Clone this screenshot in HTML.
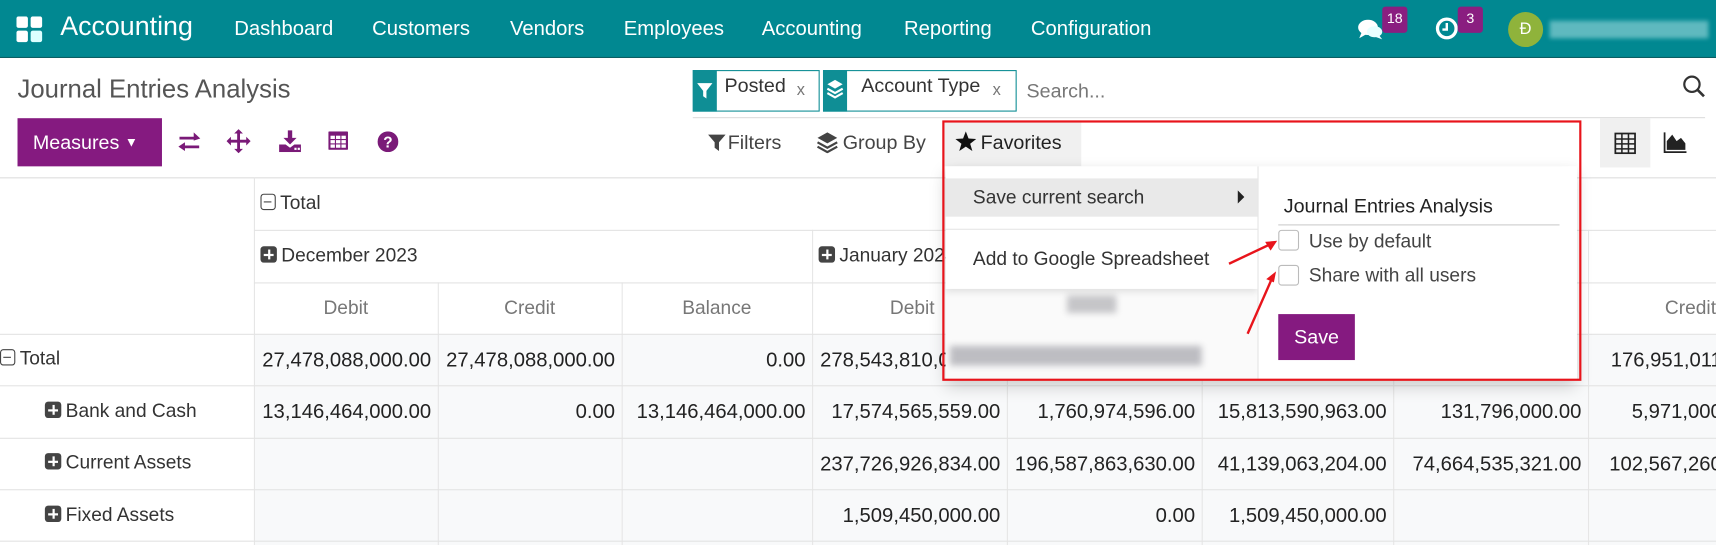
<!DOCTYPE html>
<html><head><meta charset="utf-8"><style>
*{box-sizing:border-box;margin:0;padding:0}
html,body{width:1716px;height:545px;overflow:hidden;background:#fff;font-family:"Liberation Sans",Arial,sans-serif}
#w{position:absolute;left:0;top:0;width:1568px;height:498px;transform:scale(1.0944);transform-origin:0 0;overflow:hidden}
.a{position:absolute;white-space:nowrap}
.nav{position:absolute;left:0;top:0;width:1568px;height:53px;background:#018891;border-bottom:1px solid #0b5e63}
.nv{position:absolute;top:15px;color:#fff;font-size:18.5px}
.badge{position:absolute;background:#8a1e80;color:#fff;font-size:13px;border-radius:3px;text-align:center;line-height:22px;height:24px}
.pi{fill:#7a1a78}
.cell{position:absolute;height:47px;line-height:47px;font-size:18.5px;color:#222;text-align:right;padding-right:6px;overflow:hidden;white-space:nowrap}
.hd{color:#777;text-align:center;padding:0;font-size:17.5px}
.vl{position:absolute;width:1px;background:#e6e6e6}
.hl{position:absolute;height:1px;background:#e3e3e3}
.plus{display:inline-block;width:15px;height:15px;background:#444;border-radius:3px;position:relative;vertical-align:-1px;margin-right:4px}
.plus:before{content:"";position:absolute;left:3px;top:6.5px;width:9px;height:2px;background:#fff}
.plus:after{content:"";position:absolute;left:6.5px;top:3px;width:2px;height:9px;background:#fff}
.minus{display:inline-block;width:14px;height:15px;border:1.5px solid #444;border-radius:3px;position:relative;vertical-align:-1px;margin-right:4px}
.minus:before{content:"";position:absolute;left:2px;top:5.5px;width:7px;height:1.5px;background:#444}
.blur{position:absolute;background:#c8c8cc;filter:blur(3px)}
</style></head><body><div id="w">
<div class="nav">
  <svg class="a" style="left:15px;top:15px" width="24" height="24"><rect x="0" y="0" width="10.5" height="10.5" rx="2" fill="#fff"/><rect x="13" y="0" width="10.5" height="10.5" rx="2" fill="#fff"/><rect x="0" y="13" width="10.5" height="10.5" rx="2" fill="#fff"/><rect x="13" y="13" width="10.5" height="10.5" rx="2" fill="#dff"/></svg>
  <div class="nv" style="left:55px;top:11px;font-size:24.5px">Accounting</div>
  <div class="nv" style="left:214px">Dashboard</div>
  <div class="nv" style="left:340px">Customers</div>
  <div class="nv" style="left:466px">Vendors</div>
  <div class="nv" style="left:570px">Employees</div>
  <div class="nv" style="left:696px">Accounting</div>
  <div class="nv" style="left:826px">Reporting</div>
  <div class="nv" style="left:942px">Configuration</div>
  <svg class="a" style="left:1240px;top:16px" width="26" height="22"><ellipse cx="10" cy="9" rx="9" ry="7" fill="#fff"/><path d="M4 14 L2 19 L9 15Z" fill="#fff"/><ellipse cx="16" cy="13" rx="7" ry="5" fill="#e8ffff"/><path d="M20 16 L23 20 L15 17Z" fill="#e8ffff"/></svg>
  <div class="badge" style="left:1263px;top:6px;width:23px">18</div>
  <svg class="a" style="left:1311px;top:15px" width="22" height="22"><circle cx="11" cy="11" r="8.5" stroke="#fff" stroke-width="3" fill="none"/><path d="M11 6 V12 H7" stroke="#fff" stroke-width="2.2" fill="none"/></svg>
  <div class="badge" style="left:1332px;top:6px;width:23px">3</div>
  <div class="a" style="left:1378px;top:11px;width:32px;height:32px;border-radius:50%;background:#8fb33b;color:#fff;font-size:15px;text-align:center;line-height:32px">Đ</div>
  <div class="blur" style="left:1416px;top:19px;width:145px;height:16px;background:#5fb9bf;filter:blur(2px)"></div>
</div>
<div class="a" style="left:16px;top:68px;font-size:23.5px;color:#555">Journal Entries Analysis</div>
<div class="a" style="left:633px;top:64px;width:116px;height:38px;border:1px solid #0f8e95"></div>
<div class="a" style="left:633px;top:64px;width:22px;height:38px;background:#0f8e95"></div>
<svg class="a" style="left:637px;top:75px" width="14" height="16"><path d="M0 1 H14 L8.5 8 V15 L5.5 13 V8Z" fill="#fff"/></svg>
<div class="a" style="left:662px;top:68px;font-size:18px;color:#333">Posted</div>
<div class="a" style="left:728px;top:74px;font-size:15px;color:#777">x</div>
<div class="a" style="left:752px;top:64px;width:177px;height:38px;border:1px solid #0f8e95"></div>
<div class="a" style="left:752px;top:64px;width:22px;height:38px;background:#0f8e95"></div>
<svg class="a" style="left:755px;top:72px" width="16" height="20"><path d="M8 1 L15 5 L8 9 L1 5Z" fill="#fff"/><path d="M1 9 L8 13 L15 9" stroke="#fff" stroke-width="2" fill="none"/><path d="M1 13 L8 17 L15 13" stroke="#fff" stroke-width="2" fill="none"/></svg>
<div class="a" style="left:787px;top:68px;font-size:18px;color:#333">Account Type</div>
<div class="a" style="left:907px;top:74px;font-size:15px;color:#777">x</div>
<div class="a" style="left:938px;top:73px;font-size:18px;color:#777">Search...</div>
<svg class="a" style="left:1537px;top:68px" width="22" height="22"><circle cx="9" cy="9" r="7" stroke="#333" stroke-width="2" fill="none"/><path d="M14 14 L20 20" stroke="#333" stroke-width="2.4"/></svg>
<div class="hl" style="left:633px;top:107px;width:925px;background:#ddd"></div>
<div class="a" style="left:16px;top:108px;width:132px;height:44px;background:#851a80;color:#fff;font-size:18px;line-height:44px;padding-left:14px">Measures <span style="font-size:12px;vertical-align:2px">▼</span></div>
<svg class="a" style="left:162px;top:120px" width="22" height="20"><path class="pi" d="M2 5 H15 V1 L21 6.5 L15 8.5 V7.5 H2Z M20 13 H7 V10 L1 14 L7 18 V15.5 H20Z"/></svg>
<svg class="a" style="left:207px;top:118px" width="22" height="22"><path class="pi" d="M11 0 L15 4 H12.3 V9.7 H18 V7 L22 11 L18 15 V12.3 H12.3 V18 H15 L11 22 L7 18 H9.7 V12.3 H4 V15 L0 11 L4 7 V9.7 H9.7 V4 H7Z"/></svg>
<svg class="a" style="left:255px;top:119px" width="20" height="20"><path class="pi" d="M8 0 H12 V7 H16 L10 13 L4 7 H8Z M0 13 H6 L10 16 L14 13 H20 V20 H0Z"/><rect x="14" y="16" width="2" height="2" fill="#fff"/><rect x="17" y="16" width="2" height="2" fill="#fff"/></svg>
<svg class="a" style="left:300px;top:120px" width="18" height="17"><rect class="pi" width="18" height="17" rx="1"/><g fill="#fff"><rect x="2" y="4" width="4" height="3"/><rect x="7" y="4" width="4" height="3"/><rect x="12" y="4" width="4" height="3"/><rect x="2" y="8" width="4" height="3"/><rect x="7" y="8" width="4" height="3"/><rect x="12" y="8" width="4" height="3"/><rect x="2" y="12" width="4" height="3"/><rect x="7" y="12" width="4" height="3"/><rect x="12" y="12" width="4" height="3"/></g></svg>
<svg class="a" style="left:345px;top:120px" width="19" height="19"><circle class="pi" cx="9.5" cy="9.5" r="9.5"/><text x="9.5" y="15" fill="#fff" font-size="14" font-weight="bold" text-anchor="middle" font-family="Liberation Sans">?</text></svg>
<svg class="a" style="left:647px;top:122px" width="16" height="16"><path d="M0 1 H16 L10 8 V16 L6 13 V8Z" fill="#444"/></svg>
<div class="a" style="left:665px;top:120px;font-size:18px;color:#444">Filters</div>
<svg class="a" style="left:746px;top:120px" width="20" height="20"><path d="M10 1 L19 6 L10 11 L1 6Z" fill="#444"/><path d="M1 10 L10 15 L19 10" stroke="#444" stroke-width="2" fill="none"/><path d="M1 14 L10 19 L19 14" stroke="#444" stroke-width="2" fill="none"/></svg>
<div class="a" style="left:770px;top:120px;font-size:18px;color:#444">Group By</div>
<div class="a" style="left:862px;top:110px;width:126px;height:42px;background:#f0f0f0"></div>
<svg class="a" style="left:873px;top:120px" width="19" height="18"><path d="M9.5 0 L12 6.5 L19 7 L13.5 11.3 L15.5 18 L9.5 14 L3.5 18 L5.5 11.3 L0 7 L7 6.5Z" fill="#111"/></svg>
<div class="a" style="left:896px;top:120px;font-size:18px;color:#222">Favorites</div>
<div class="a" style="left:1462px;top:108px;width:46px;height:45px;background:#f0f0f0"></div>
<svg class="a" style="left:1475px;top:121px" width="20" height="20"><rect x="1" y="1" width="18" height="18" fill="none" stroke="#222" stroke-width="1.6"/><path d="M1 6 H19 M1 10.5 H19 M1 15 H19 M7 1 V19 M13 1 V19" stroke="#222" stroke-width="1.4"/></svg>
<svg class="a" style="left:1520px;top:120px" width="22" height="20"><path d="M1 1 V19 H21" stroke="#222" stroke-width="1.6" fill="none"/><path d="M3 17 V9 L8 3 L12 9 L16 6 L20 11 V17Z" fill="#222"/></svg>
<div class="hl" style="left:0;top:162px;width:1568px;background:#ddd"></div>
<div class="a" style="left:232px;top:305px;width:1336px;height:193px;background:#f8f9fa"></div>
<div class="vl" style="left:232px;top:162px;height:336px"></div>
<div class="vl" style="left:400px;top:258px;height:240px"></div>
<div class="vl" style="left:568px;top:258px;height:240px"></div>
<div class="vl" style="left:742px;top:210px;height:288px"></div>
<div class="vl" style="left:920px;top:258px;height:240px"></div>
<div class="vl" style="left:1098px;top:258px;height:240px"></div>
<div class="vl" style="left:1273px;top:258px;height:240px"></div>
<div class="vl" style="left:1451px;top:210px;height:288px"></div>
<div class="hl" style="left:232px;top:210px;width:1336px"></div>
<div class="hl" style="left:232px;top:258px;width:1336px"></div>
<div class="hl" style="left:0;top:305px;width:1568px"></div>
<div class="hl" style="left:0;top:352px;width:1568px"></div>
<div class="hl" style="left:0;top:400px;width:1568px"></div>
<div class="hl" style="left:0;top:447px;width:1568px"></div>
<div class="hl" style="left:0;top:494px;width:1568px"></div>
<div class="a" style="left:238px;top:175px;font-size:17.5px;color:#333"><span class="minus"></span>Total</div>
<div class="a" style="left:238px;top:223px;font-size:17.5px;color:#333"><span class="plus"></span>December 2023</div>
<div class="a" style="left:748px;top:223px;font-size:17.5px;color:#333"><span class="plus"></span>January 2024</div>
<div class="cell hd" style="left:232px;top:258px;width:168px">Debit</div>
<div class="cell hd" style="left:400px;top:258px;width:168px">Credit</div>
<div class="cell hd" style="left:568px;top:258px;width:174px">Balance</div>
<div class="cell hd" style="left:742px;top:258px;width:178px;text-align:right;padding-right:66px">Debit</div>
<div class="cell hd" style="left:1451px;top:258px;width:117px;text-align:right;padding-right:0">Credit</div>
<div class="a" style="left:0;top:317px;font-size:17.5px;color:#333"><span class="minus"></span>Total</div>
<div class="a" style="left:41px;top:365px;font-size:17.5px;color:#333"><span class="plus"></span>Bank and Cash</div>
<div class="a" style="left:41px;top:412px;font-size:17.5px;color:#333"><span class="plus"></span>Current Assets</div>
<div class="a" style="left:41px;top:460px;font-size:17.5px;color:#333"><span class="plus"></span>Fixed Assets</div>
<div class="cell" style="left:232px;top:305px;width:168px">27,478,088,000.00</div>
<div class="cell" style="left:400px;top:305px;width:168px">27,478,088,000.00</div>
<div class="cell" style="left:568px;top:305px;width:174px">0.00</div>
<div class="cell" style="left:742px;top:305px;width:178px">278,543,810,000.00</div>
<div class="cell" style="left:1451px;top:305px;width:190px">176,951,011,000.00</div>
<div class="cell" style="left:232px;top:352px;width:168px">13,146,464,000.00</div>
<div class="cell" style="left:400px;top:352px;width:168px">0.00</div>
<div class="cell" style="left:568px;top:352px;width:174px">13,146,464,000.00</div>
<div class="cell" style="left:742px;top:352px;width:178px">17,574,565,559.00</div>
<div class="cell" style="left:920px;top:352px;width:178px">1,760,974,596.00</div>
<div class="cell" style="left:1098px;top:352px;width:175px">15,813,590,963.00</div>
<div class="cell" style="left:1273px;top:352px;width:178px">131,796,000.00</div>
<div class="cell" style="left:1451px;top:352px;width:190px">5,971,000,000.00</div>
<div class="cell" style="left:742px;top:400px;width:178px">237,726,926,834.00</div>
<div class="cell" style="left:920px;top:400px;width:178px">196,587,863,630.00</div>
<div class="cell" style="left:1098px;top:400px;width:175px">41,139,063,204.00</div>
<div class="cell" style="left:1273px;top:400px;width:178px">74,664,535,321.00</div>
<div class="cell" style="left:1451px;top:400px;width:190px">102,567,260,000.00</div>
<div class="cell" style="left:742px;top:447px;width:178px">1,509,450,000.00</div>
<div class="cell" style="left:920px;top:447px;width:178px">0.00</div>
<div class="cell" style="left:1098px;top:447px;width:175px">1,509,450,000.00</div>
<div class="a" style="left:864px;top:152px;width:576px;height:195px;background:#fff;box-shadow:0 6px 14px rgba(0,0,0,.18)"></div>
<div class="a" style="left:864px;top:263px;width:285px;height:84px;background:#fafafa"></div>
<div class="blur" style="left:975px;top:270px;width:45px;height:16px;background:#c5c5c8"></div>
<div class="blur" style="left:868px;top:316px;width:230px;height:18px;background:#bdbdc2"></div>
<div class="a" style="left:864px;top:152px;width:285px;height:112px;background:#fff;box-shadow:0 3px 6px rgba(0,0,0,.1)"></div>
<div class="a" style="left:864px;top:163px;width:285px;height:35px;background:#e9e9e9"></div>
<div class="a" style="left:889px;top:170px;font-size:17.5px;color:#333">Save current search</div>
<svg class="a" style="left:1130px;top:174px" width="8" height="12"><path d="M1 0 L7 6 L1 12Z" fill="#222"/></svg>
<div class="hl" style="left:864px;top:209px;width:285px;background:#e5e5e5"></div>
<div class="a" style="left:889px;top:226px;font-size:17.5px;color:#333">Add to Google Spreadsheet</div>
<div class="a" style="left:1149px;top:152px;width:292px;height:195px;background:#fff;border-left:1px solid #e5e5e5"></div>
<div class="a" style="left:1173px;top:178px;font-size:18px;color:#222">Journal Entries Analysis</div>
<div class="hl" style="left:1168px;top:205px;width:257px;background:#ccc"></div>
<div class="a" style="left:1168px;top:210px;width:19px;height:19px;border:1px solid #bbb;border-radius:3px;background:#fff"></div>
<div class="a" style="left:1196px;top:210px;font-size:17.5px;color:#444">Use by default</div>
<div class="a" style="left:1168px;top:242px;width:19px;height:19px;border:1px solid #bbb;border-radius:3px;background:#fff"></div>
<div class="a" style="left:1196px;top:241px;font-size:17.5px;color:#444">Share with all users</div>
<div class="a" style="left:1168px;top:287px;width:70px;height:42px;background:#851a80;color:#fff;font-size:18px;line-height:42px;text-align:center">Save</div>
<svg class="a" style="left:1115px;top:215px" width="60" height="100"><path d="M8 26 L46 8" stroke="#e8141b" stroke-width="2.2"/><path d="M52 5 L41 6 L46 14Z" fill="#e8141b"/><path d="M25 90 L47 40" stroke="#e8141b" stroke-width="2.2"/><path d="M51 33 L42 40 L49 43Z" fill="#e8141b"/></svg>
<div class="a" style="left:861px;top:110px;width:584px;height:238px;border:2.5px solid #e8141b"></div>
</div></body></html>
